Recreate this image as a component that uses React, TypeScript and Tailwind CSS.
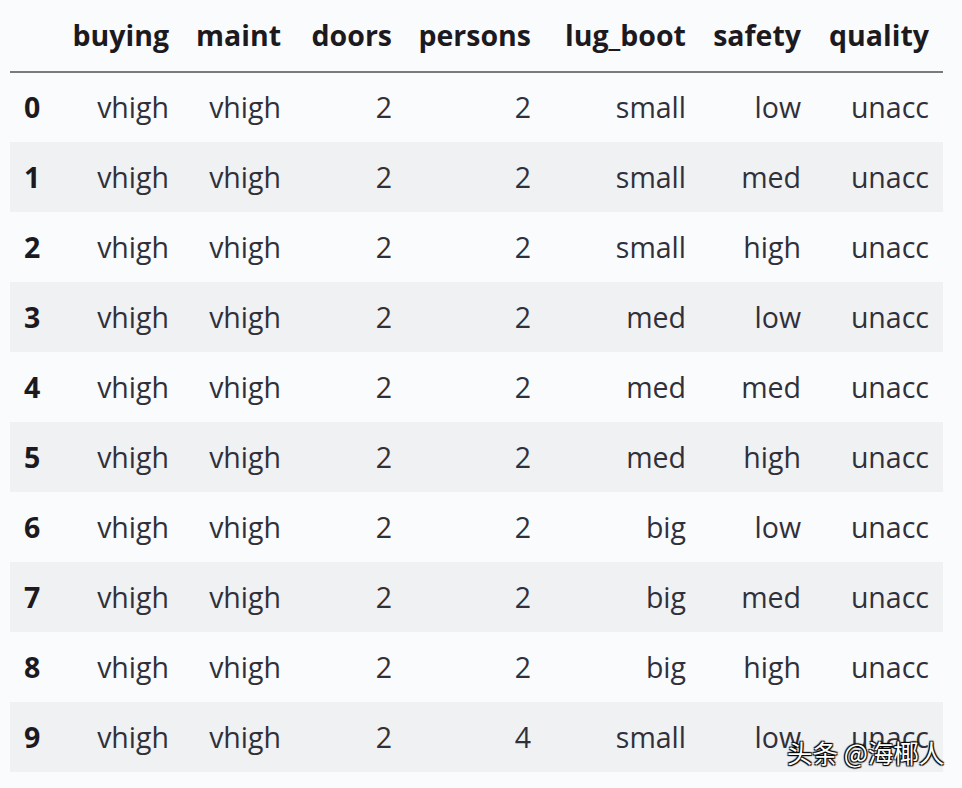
const columns = ['buying', 'maint', 'doors', 'persons', 'lug_boot', 'safety', 'quality'];

const rows: (string | number)[][] = [
  ['vhigh', 'vhigh', 2, 2, 'small', 'low', 'unacc'],
  ['vhigh', 'vhigh', 2, 2, 'small', 'med', 'unacc'],
  ['vhigh', 'vhigh', 2, 2, 'small', 'high', 'unacc'],
  ['vhigh', 'vhigh', 2, 2, 'med', 'low', 'unacc'],
  ['vhigh', 'vhigh', 2, 2, 'med', 'med', 'unacc'],
  ['vhigh', 'vhigh', 2, 2, 'med', 'high', 'unacc'],
  ['vhigh', 'vhigh', 2, 2, 'big', 'low', 'unacc'],
  ['vhigh', 'vhigh', 2, 2, 'big', 'med', 'unacc'],
  ['vhigh', 'vhigh', 2, 2, 'big', 'high', 'unacc'],
  ['vhigh', 'vhigh', 2, 4, 'small', 'low', 'unacc'],
];

const widths = ['w-[48px]', 'w-[125px]', 'w-[112px]', 'w-[111px]', 'w-[139px]', 'w-[155px]', 'w-[115px]', 'w-[128px]'];

export default function App() {
  return (
    <div className="relative h-[788px] w-[962px] overflow-hidden bg-[#fafbfc] font-['Open_Sans',sans-serif] text-[28.5px]">
      <table className="ml-[10px] w-[933px] table-fixed border-collapse">
        <colgroup>
          {widths.map((w, i) => (
            <col key={i} className={w} />
          ))}
        </colgroup>
        <thead>
          <tr className="h-[72px] border-b-2 border-[#7b7b7b]">
            <th />
            {columns.map((c) => (
              <th key={c} className="pr-[14px] pb-[1px] text-right font-bold text-[#1c1a1f]">
                {c}
              </th>
            ))}
          </tr>
        </thead>
        <tbody>
          {rows.map((row, i) => (
            <tr key={i} className={`h-[70px] ${i % 2 === 1 ? 'bg-[#f0f1f3]' : ''}`}>
              <th className="pl-[14px] text-left font-bold text-[#1c1a1f]">{i}</th>
              {row.map((v, j) => (
                <td key={j} className="pr-[14px] text-right text-[#30303a]">
                  {v}
                </td>
              ))}
            </tr>
          ))}
        </tbody>
      </table>
      <div className="absolute left-[787px] top-[733px] font-['Noto_Sans_CJK_SC',sans-serif] text-[25.5px] text-white [text-shadow:1px_1px_1px_#000,-1px_-1px_1px_#000,1px_-1px_1px_#000,-1px_1px_1px_#000]">
        头条 @海椰人
      </div>
    </div>
  );
}
